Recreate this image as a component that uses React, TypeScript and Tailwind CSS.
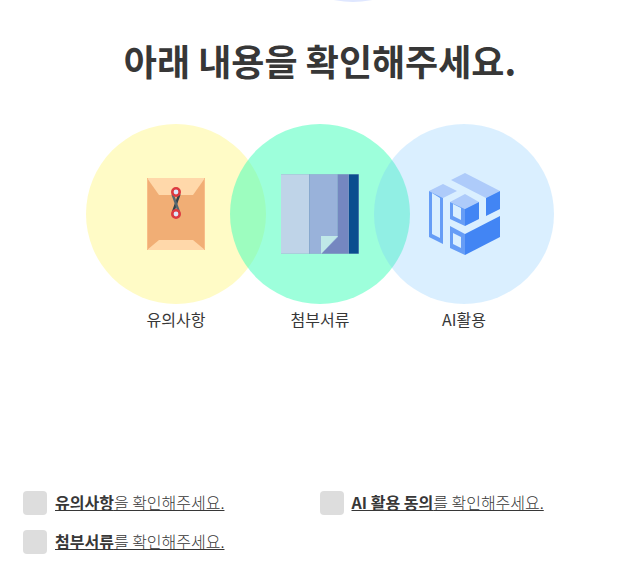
import type { ReactNode } from "react";

function EnvelopeIcon() {
  return (
    <svg viewBox="0 0 58 72" className="h-[72px] w-[58px]" aria-hidden="true">
      <rect width="58" height="72" fill="#f1ae75" />
      <path d="M0 0H58L46 17H12Z" fill="#ffd8aa" />
      <path d="M0 72H58L46 62H12Z" fill="#ffd8aa" />
      <path d="M.5 0V72M57.5 0V72" stroke="#f8bd88" strokeWidth="1" />
      <path d="M32.5 16L26 34" stroke="#33434b" strokeWidth="2.4" />
      <path d="M25.5 16L32 34" stroke="#546872" strokeWidth="2.4" />
      <circle cx="29" cy="14" r="3.7" fill="#dce8fb" stroke="#dc3a40" strokeWidth="2.6" />
      <circle cx="29" cy="36" r="3.7" fill="#dce8fb" stroke="#dc3a40" strokeWidth="2.6" />
    </svg>
  );
}

function DocumentIcon() {
  return (
    <svg viewBox="0 0 78 80" className="h-[80px] w-[78px]" aria-hidden="true">
      <rect width="28" height="80" fill="#bfd4e8" />
      <rect x="28" width="29" height="80" fill="#99b2da" />
      <path d="M57 0H68V80H40L57 63Z" fill="#7587c0" />
      <rect x="68" width="10" height="80" fill="#0a4d8f" />
      <path d="M28.5 0V80M56.5 0V62M67.5 0V80M77.5 0V80" stroke="#789fc2" strokeOpacity=".5" />
      <path d="M0 79.5H78M0 .5H78" stroke="#8cc5c9" strokeOpacity=".4" />
      <path d="M40 62H57L40 80Z" fill="#c0e8e8" />
    </svg>
  );
}

function CubeIcon() {
  return (
    <svg viewBox="-1 0 72 82" className="h-[82px] w-[72px]" aria-hidden="true">
      <path d="M22 7L36 0L71 18L57 25Z" fill="#aecbfa" />
      <path d="M0 18L14 11L28 18L14 25Z" fill="#aecbfa" />
      <path d="M21 29L36 21L50 29L36 36Z" fill="#aecbfa" />
      <path d="M57 25L71 18V36L57 43Z" fill="#4285f4" />
      <path d="M36 36L50 29V46L36 53Z" fill="#4285f4" />
      <path d="M36 61L71 43V64L36 82Z" fill="#4285f4" />
      <path fillRule="evenodd" d="M0 18L14 25V71L0 64ZM3 20V61L11 65V25Z" fill="#669df6" />
      <path fillRule="evenodd" d="M21 29L36 36V53L21 46ZM24 31V43L32 47V35Z" fill="#669df6" />
      <path fillRule="evenodd" d="M21 53L36 61V82L21 75ZM24 60V71L32 75V64Z" fill="#669df6" />
    </svg>
  );
}

function Topic({ label, color, children }: { label: string; color: string; children: ReactNode }) {
  return (
    <li className="-mx-[18px] flex flex-col items-center gap-[3px]">
      <div className={`flex size-[180px] items-center justify-center rounded-full ${color}`}>{children}</div>
      <span className="text-base leading-6">{label}</span>
    </li>
  );
}

function Confirm({ id, strong, rest }: { id: string; strong: string; rest: string }) {
  return (
    <div className="flex items-start gap-2">
      <input
        id={id}
        type="checkbox"
        className="size-6 shrink-0 appearance-none rounded bg-[#dddddd] checked:bg-[#4285f4]"
      />
      <label htmlFor={id} className="text-base leading-[22px] font-light underline">
        <strong className="font-bold">{strong}</strong>
        {rest}
      </label>
    </div>
  );
}

export default function App() {
  return (
    <main className="bg-white font-['Noto_Sans_CJK_KR',sans-serif] text-[#373737]">
      <div className="flex h-[2px] items-end justify-center overflow-hidden pl-[78px]">
        <div className="size-[180px] shrink-0 rounded-full bg-[#dfe7ff]" />
      </div>
      <h1 className="mt-8 pl-3 text-center text-4xl leading-[52px] font-bold">아래 내용을 확인해주세요.</h1>
      <ul className="mt-[38px] flex justify-center pl-3">
        <Topic label="유의사항" color="bg-[#fffbc6]">
          <EnvelopeIcon />
        </Topic>
        <Topic label="첨부서류" color="bg-[#3cffb8]/50">
          <DocumentIcon />
        </Topic>
        <Topic label="AI활용" color="bg-[#71c0ff]/26">
          <CubeIcon />
        </Topic>
      </ul>
      <form className="mt-40 grid grid-cols-2 gap-y-[15px] pr-3 pb-8 pl-[23px]">
        <Confirm id="notice" strong="유의사항" rest="을 확인해주세요." />
        <Confirm id="ai" strong="AI 활용 동의" rest="를 확인해주세요." />
        <Confirm id="documents" strong="첨부서류" rest="를 확인해주세요." />
      </form>
    </main>
  );
}
